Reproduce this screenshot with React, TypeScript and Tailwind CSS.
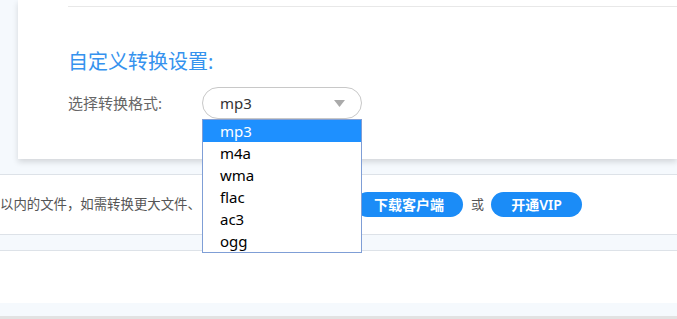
const font = { fontFamily: '"Noto Sans", "Noto Sans CJK SC", sans-serif' };

const formats = ["mp3", "m4a", "wma", "flac", "ac3", "ogg"];

export default function App() {
  return (
    <div className="w-full h-[319px] overflow-hidden bg-[#f5f9fd] flex flex-col" style={font}>
      {/* settings card */}
      <div className="ml-[18px] h-[159px] shrink-0 bg-white shadow-[0_3px_6px_rgba(0,0,0,0.14)] pt-[6px] pl-[50px] relative z-10">
        <div className="border-t border-[#e8e8e8]"></div>
        <h2 className="mt-[42px] text-[20px] leading-[26px] text-[#3592ee]">自定义转换设置:</h2>
        <div className="mt-[12px] flex items-center h-[32px]">
          <span className="text-[15px] text-[#666] w-[134px]">选择转换格式:</span>
          <div className="relative w-[160px]">
            <div className="h-[32px] rounded-full border border-[#c8c8c8] flex items-center pl-[17px] pr-[16px] justify-between">
              <span className="text-[15px] text-[#333]">mp3</span>
              <svg width="11" height="7" viewBox="0 0 11 7">
                <path d="M0 0h11L5.5 7z" fill="#aaa" />
              </svg>
            </div>
            <ul className="absolute top-full left-0 w-full bg-white border border-[#7f9ed6] z-20">
              {formats.map((f, i) => (
                <li
                  key={f}
                  className={
                    "h-[22px] leading-[22px] pl-[17px] text-[15px] " +
                    (i === 0 ? "bg-[#1e90ff] text-white" : "text-black")
                  }
                >
                  {f}
                </li>
              ))}
            </ul>
          </div>
        </div>
      </div>

      <div className="h-[15px] shrink-0"></div>

      {/* notice strip */}
      <div className="h-[61px] shrink-0 bg-white border-t border-b border-[#dde2e8] flex items-center">
        <span className="text-[13.4px] text-[#555] w-[355px] whitespace-nowrap overflow-hidden">以内的文件，如需转换更大文件、</span>
        <button className="h-[25px] w-[108px] rounded-full bg-[#1b8cf7] text-white text-[14px] font-semibold">下载客户端</button>
        <span className="ml-[8px] mr-[7px] text-[13px] text-[#555]">或</span>
        <button className="h-[25px] w-[91px] rounded-full bg-[#1b8cf7] text-white text-[14px] font-semibold">开通VIP</button>
      </div>

      <div className="h-[15px] shrink-0"></div>

      <div className="h-[53px] shrink-0 bg-white border-t border-[#dde2e8]"></div>

      <div className="h-[13px] shrink-0"></div>

      <div className="flex-1 bg-[#e2e2e2]"></div>
    </div>
  );
}
